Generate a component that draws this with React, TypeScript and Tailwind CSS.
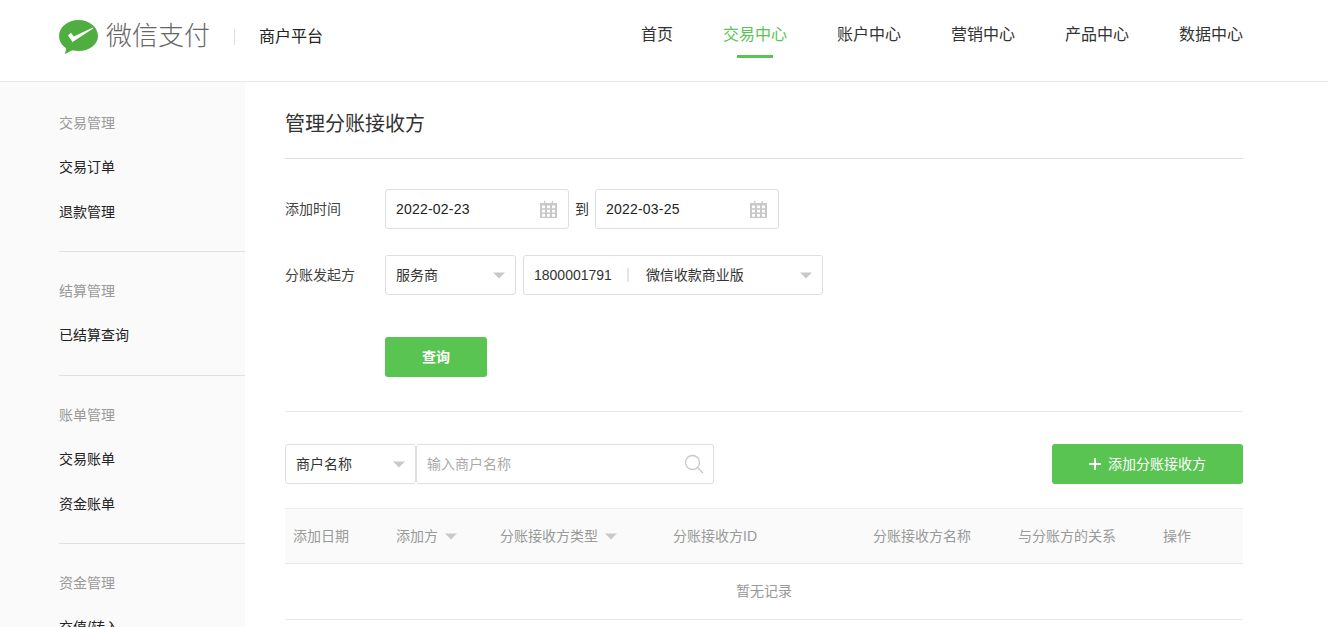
const font = { fontFamily: '"Liberation Sans", "Noto Sans CJK SC", sans-serif' }

const sideGroups = [
  { title: '交易管理', items: ['交易订单', '退款管理'], cls: 'pt-[18px] pb-[16px]' },
  { title: '结算管理', items: ['已结算查询'], cls: 'pt-[16px] pb-[17px]' },
  { title: '账单管理', items: ['交易账单', '资金账单'], cls: 'pt-[16px] pb-[16px]' },
  { title: '资金管理', items: ['充值/转入'], cls: 'pt-[16px] pb-[16px]' },
]

const navItems = ['首页', '交易中心', '账户中心', '营销中心', '产品中心', '数据中心']

function Logo() {
  return (
    <svg width="40" height="36" viewBox="0 0 40 36" className="shrink-0">
      <path
        d="M19.500 1C8.800 1 0 8.200 0 17c0 5 2.800 9.400 7.200 12.300L6 35l7.300-3.700c2 .5 4 .7 6.200.7C30.200 32 39 25.800 39 17S30.200 1 19.500 1z"
        fill="#4fae3f"
      />
      <path d="M9 16.500l3-2.700 2.800 3.800L34 8.500l.2 1L13.500 23z" fill="#fff" />
    </svg>
  )
}

function Caret({ className = '' }: { className?: string }) {
  return (
    <svg width="12" height="7" viewBox="0 0 12 7" className={'shrink-0 ' + className}>
      <path d="M0 0.500h12L6 6.500z" fill="#c9c9c9" />
    </svg>
  )
}

function CalendarIcon() {
  return (
    <svg width="17" height="17" viewBox="0 0 17 17" className="shrink-0">
      <path d="M0 2h4V0h1.300v2h6.400V0H13v2h4v15H0z" fill="#c8c8c8" />
      {[4.500, 8.800, 13].map(y =>
        [2, 7, 12].map(x => (
          <rect key={`${x}-${y}`} x={x} y={y} width="3" height="2.700" fill="#fff" />
        )),
      )}
    </svg>
  )
}

function SearchIcon() {
  return (
    <svg width="20" height="20" viewBox="0 0 20 20" fill="none" stroke="#c8c8c8" strokeWidth="1.300" className="shrink-0">
      <circle cx="8.500" cy="8.500" r="7" />
      <path d="M13.500 13.500L19 19" />
    </svg>
  )
}

function DateBox({ value }: { value: string }) {
  return (
    <div className="flex h-10 w-[184px] items-center justify-between rounded-[3px] border border-[#dedede] pl-[10px] pr-[11px] text-[14px] text-[#222]">
      <span className="tracking-[0.2px]">{value}</span>
      <CalendarIcon />
    </div>
  )
}

export default function App() {
  return (
    <div style={font} className="h-[627px] w-[1328px] overflow-hidden bg-white text-[14px] text-[#333]">
      {/* 상단 헤더 */}
      <header className="flex h-[82px] items-center justify-between border-b border-[#e8e8e8] pl-[59px] pr-[85px]">
        <div className="flex items-center pb-[8px]">
          <Logo />
          <span className="ml-[7px] text-[26px] font-light tracking-normal text-[#666]">微信支付</span>
          <span className="ml-[24px] h-[16px] w-px bg-[#dcdcdc]" />
          <span className="ml-[24px] text-[16px] text-[#222]">商户平台</span>
        </div>
        <nav className="flex h-full gap-[50px]">
          {navItems.map(item => (
            <div key={item} className="relative flex h-full items-center pb-[12px] text-[16px]">
              <span className={item === '交易中心' ? 'text-[#5ac453]' : 'text-[#333]'}>{item}</span>
              {item === '交易中心' && <span className="absolute bottom-[23px] left-[14px] h-[3px] w-[36px] bg-[#5ac453]" />}
            </div>
          ))}
        </nav>
      </header>

      <div className="flex">
        {/* 사이드바 */}
        <aside className="h-[545px] w-[245px] shrink-0 bg-[#fafafa] pl-[59px]">
          {sideGroups.map((g, i) => (
            <div key={g.title} className={g.cls + (i < 3 ? ' border-b border-[#e0e0e0]' : '')}>
              <div className="flex h-[45px] items-center pt-[2px] text-[#999]">{g.title}</div>
              {g.items.map(it => (
                <div key={it} className="flex h-[45px] items-center text-[#222]">{it}</div>
              ))}
            </div>
          ))}
        </aside>

        {/* 본문 */}
        <main className="ml-[40px] w-[958px]">
          <div className="flex h-[77px] items-center border-b border-[#dcdcdc] pt-[7px] text-[20px] text-[#333]">
            管理分账接收方
          </div>

          <div className="mt-[30px] flex items-center">
            <span className="w-[100px] text-[#444]">添加时间</span>
            <DateBox value="2022-02-23" />
            <span className="w-[26px] text-center text-[#333]">到</span>
            <DateBox value="2022-03-25" />
          </div>

          <div className="mt-[26px] flex items-center">
            <span className="w-[100px] text-[#444]">分账发起方</span>
            <div className="flex h-10 w-[131px] items-center justify-between rounded-[3px] border border-[#dedede] px-[10px] text-[#333]">
              <span>服务商</span>
              <Caret />
            </div>
            <div className="ml-[7px] flex h-10 w-[300px] items-center rounded-[3px] border border-[#dedede] px-[10px] text-[#333]">
              <span>1800001791</span>
              <span className="ml-[15px] h-[14px] w-[2px] bg-[#e5e5e5]" />
              <span className="ml-[17px]">微信收款商业版</span>
              <Caret className="ml-auto" />
            </div>
          </div>

          <button className="ml-[100px] mt-[42px] block h-10 w-[102px] rounded-[3px] bg-[#5ac453] font-bold text-white">
            查询
          </button>

          <div className="mt-[34px] border-t border-[#e8e8e8]" />

          <div className="mt-[32px] flex items-center justify-between">
            <div className="flex">
              <div className="flex h-10 w-[131px] items-center justify-between rounded-[3px] border border-[#dedede] px-[10px] text-[#333]">
                <span>商户名称</span>
                <Caret />
              </div>
              <div className="flex h-10 w-[298px] items-center justify-between rounded-[3px] border border-[#dedede] pl-[10px] pr-[9px] text-[#aaa]">
                <span>输入商户名称</span>
                <SearchIcon />
              </div>
            </div>
            <button className="flex h-10 w-[191px] items-center justify-center rounded-[3px] bg-[#5ac453] text-white">
              <svg width="12" height="12" viewBox="0 0 12 12" className="mr-[7px]">
                <path d="M5 0h2v5h5v2H7v5H5V7H0V5h5z" fill="#fff" />
              </svg>
              添加分账接收方
            </button>
          </div>

          <div className="mt-[24px] grid h-[56px] grid-cols-[103px_104px_173px_200px_145px_145px_1fr] items-center border-y border-y-[#eeeeee] border-b-[#e8e8e8] bg-[#fafafa] pl-[8px] text-[#999]">
            <span>添加日期</span>
            <span className="flex items-center gap-[7px]">添加方<Caret /></span>
            <span className="flex items-center gap-[7px]">分账接收方类型<Caret /></span>
            <span>分账接收方ID</span>
            <span>分账接收方名称</span>
            <span>与分账方的关系</span>
            <span>操作</span>
          </div>
          <div className="flex h-[56px] items-center justify-center border-b border-[#e8e8e8] text-[#999]">暂无记录</div>
        </main>
      </div>
    </div>
  )
}
